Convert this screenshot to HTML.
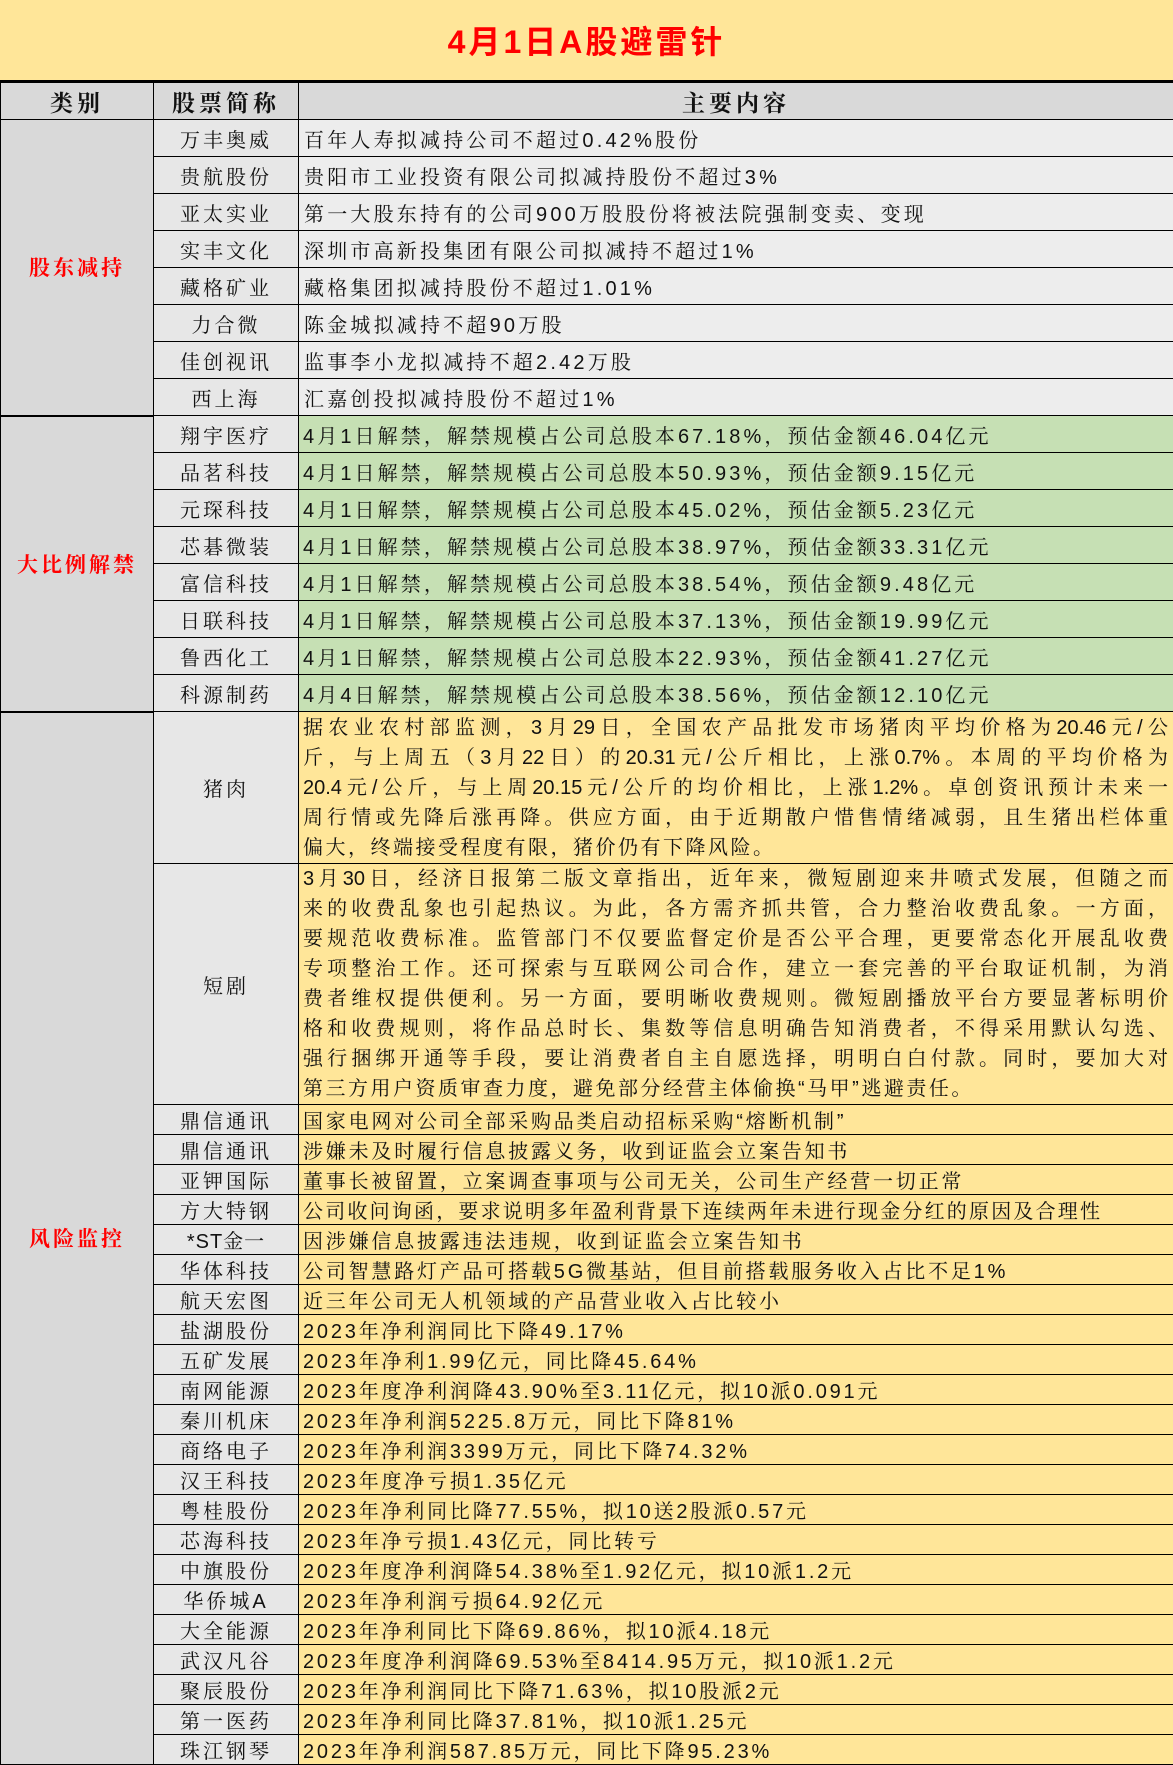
<!DOCTYPE html>
<html><head><meta charset="utf-8"><style>
*{margin:0;padding:0;box-sizing:border-box}
body{width:1173px;height:1762px;overflow:hidden;background:#fff;font-family:"Liberation Sans","Noto Serif CJK SC",serif;}
.title{height:82px;background:#FFE699;border-bottom:2px solid #000;text-align:center;line-height:84px;color:#f00;font-weight:bold;font-size:32px;letter-spacing:3px;font-family:"Liberation Sans","Noto Sans CJK SC",sans-serif}
table{border-collapse:collapse;width:1173px;table-layout:fixed}
td{border:1px solid #000;padding:0;font-size:20px;color:#111;overflow:hidden;white-space:nowrap}
.h td{background:#D9D9D9;height:37px;text-align:center;font-weight:bold;font-size:23px;letter-spacing:4px;font-family:"Liberation Sans","Noto Serif CJK SC",serif}
.cat{background:#D9D9D9;text-align:center;color:#f00;font-weight:bold;font-size:21px;letter-spacing:3px;border-bottom:2px solid #000}
.n{background:#E7E7E7;text-align:center;letter-spacing:3px}
.g{background:#EDEDED;padding-left:5px;letter-spacing:3.2px}
.gr{background:#C6E0B4;padding-left:4px;letter-spacing:3.1px}
.y{background:#FFE699;padding-left:4px;letter-spacing:2.8px}
.r37 td{height:37px}
.r30 td{height:30px}
.p{background:#FFE699;padding:0 5px 0 4px;white-space:normal;vertical-align:middle}
.p div{height:30px;line-height:30px;text-align:justify;text-align-last:justify;white-space:nowrap}
.p div.l{text-align-last:left;letter-spacing:2.5px}
</style></head><body>
<div class="title">4月1日A股避雷针</div>
<table>
<colgroup><col style="width:153px"><col style="width:145px"><col style="width:875px"></colgroup>
<tr class="h"><td>类别</td><td>股票简称</td><td>主要内容</td></tr>
<tr class="r37"><td class="cat" rowspan="8">股东减持</td><td class="n">万丰奥威</td><td class="g">百年人寿拟减持公司不超过0.42%股份</td></tr>
<tr class="r37"><td class="n">贵航股份</td><td class="g">贵阳市工业投资有限公司拟减持股份不超过3%</td></tr>
<tr class="r37"><td class="n">亚太实业</td><td class="g">第一大股东持有的公司900万股股份将被法院强制变卖、变现</td></tr>
<tr class="r37"><td class="n">实丰文化</td><td class="g">深圳市高新投集团有限公司拟减持不超过1%</td></tr>
<tr class="r37"><td class="n">藏格矿业</td><td class="g">藏格集团拟减持股份不超过1.01%</td></tr>
<tr class="r37"><td class="n">力合微</td><td class="g">陈金城拟减持不超90万股</td></tr>
<tr class="r37"><td class="n">佳创视讯</td><td class="g">监事李小龙拟减持不超2.42万股</td></tr>
<tr class="r37"><td class="n">西上海</td><td class="g">汇嘉创投拟减持股份不超过1%</td></tr>
<tr class="r37"><td class="cat" rowspan="8">大比例解禁</td><td class="n">翔宇医疗</td><td class="gr">4月1日解禁，解禁规模占公司总股本67.18%，预估金额46.04亿元</td></tr>
<tr class="r37"><td class="n">品茗科技</td><td class="gr">4月1日解禁，解禁规模占公司总股本50.93%，预估金额9.15亿元</td></tr>
<tr class="r37"><td class="n">元琛科技</td><td class="gr">4月1日解禁，解禁规模占公司总股本45.02%，预估金额5.23亿元</td></tr>
<tr class="r37"><td class="n">芯碁微装</td><td class="gr">4月1日解禁，解禁规模占公司总股本38.97%，预估金额33.31亿元</td></tr>
<tr class="r37"><td class="n">富信科技</td><td class="gr">4月1日解禁，解禁规模占公司总股本38.54%，预估金额9.48亿元</td></tr>
<tr class="r37"><td class="n">日联科技</td><td class="gr">4月1日解禁，解禁规模占公司总股本37.13%，预估金额19.99亿元</td></tr>
<tr class="r37"><td class="n">鲁西化工</td><td class="gr">4月1日解禁，解禁规模占公司总股本22.93%，预估金额41.27亿元</td></tr>
<tr class="r37"><td class="n">科源制药</td><td class="gr">4月4日解禁，解禁规模占公司总股本38.56%，预估金额12.10亿元</td></tr>
<tr><td class="cat" rowspan="24" style="border-bottom:1px solid #000">风险监控</td><td class="n" style="height:152px">猪肉</td><td class="p">
<div>据农业农村部监测，3月29日，全国农产品批发市场猪肉平均价格为20.46元/公</div>
<div>斤，与上周五（3月22日）的20.31元/公斤相比，上涨0.7%。本周的平均价格为</div>
<div>20.4元/公斤，与上周20.15元/公斤的均价相比，上涨1.2%。卓创资讯预计未来一</div>
<div>周行情或先降后涨再降。供应方面，由于近期散户惜售情绪减弱，且生猪出栏体重</div>
<div class="l">偏大，终端接受程度有限，猪价仍有下降风险。</div></td></tr>
<tr><td class="n" style="height:241px">短剧</td><td class="p">
<div>3月30日，经济日报第二版文章指出，近年来，微短剧迎来井喷式发展，但随之而</div>
<div>来的收费乱象也引起热议。为此，各方需齐抓共管，合力整治收费乱象。一方面，</div>
<div>要规范收费标准。监管部门不仅要监督定价是否公平合理，更要常态化开展乱收费</div>
<div>专项整治工作。还可探索与互联网公司合作，建立一套完善的平台取证机制，为消</div>
<div>费者维权提供便利。另一方面，要明晰收费规则。微短剧播放平台方要显著标明价</div>
<div>格和收费规则，将作品总时长、集数等信息明确告知消费者，不得采用默认勾选、</div>
<div>强行捆绑开通等手段，要让消费者自主自愿选择，明明白白付款。同时，要加大对</div>
<div class="l">第三方用户资质审查力度，避免部分经营主体偷换“马甲”逃避责任。</div></td></tr>
<tr class="r30"><td class="n">鼎信通讯</td><td class="y">国家电网对公司全部采购品类启动招标采购“熔断机制”</td></tr>
<tr class="r30"><td class="n">鼎信通讯</td><td class="y">涉嫌未及时履行信息披露义务，收到证监会立案告知书</td></tr>
<tr class="r30"><td class="n">亚钾国际</td><td class="y">董事长被留置，立案调查事项与公司无关，公司生产经营一切正常</td></tr>
<tr class="r30"><td class="n">方大特钢</td><td class="y" style="letter-spacing:2.2px">公司收问询函，要求说明多年盈利背景下连续两年未进行现金分红的原因及合理性</td></tr>
<tr class="r30"><td class="n" style="letter-spacing:1px">*ST金一</td><td class="y">因涉嫌信息披露违法违规，收到证监会立案告知书</td></tr>
<tr class="r30"><td class="n">华体科技</td><td class="y">公司智慧路灯产品可搭载5G微基站，但目前搭载服务收入占比不足1%</td></tr>
<tr class="r30"><td class="n">航天宏图</td><td class="y">近三年公司无人机领域的产品营业收入占比较小</td></tr>
<tr class="r30"><td class="n">盐湖股份</td><td class="y">2023年净利润同比下降49.17%</td></tr>
<tr class="r30"><td class="n">五矿发展</td><td class="y">2023年净利1.99亿元，同比降45.64%</td></tr>
<tr class="r30"><td class="n">南网能源</td><td class="y">2023年度净利润降43.90%至3.11亿元，拟10派0.091元</td></tr>
<tr class="r30"><td class="n">秦川机床</td><td class="y">2023年净利润5225.8万元，同比下降81%</td></tr>
<tr class="r30"><td class="n">商络电子</td><td class="y">2023年净利润3399万元，同比下降74.32%</td></tr>
<tr class="r30"><td class="n">汉王科技</td><td class="y">2023年度净亏损1.35亿元</td></tr>
<tr class="r30"><td class="n">粤桂股份</td><td class="y">2023年净利同比降77.55%，拟10送2股派0.57元</td></tr>
<tr class="r30"><td class="n">芯海科技</td><td class="y">2023年净亏损1.43亿元，同比转亏</td></tr>
<tr class="r30"><td class="n">中旗股份</td><td class="y">2023年度净利润降54.38%至1.92亿元，拟10派1.2元</td></tr>
<tr class="r30"><td class="n">华侨城A</td><td class="y">2023年净利润亏损64.92亿元</td></tr>
<tr class="r30"><td class="n">大全能源</td><td class="y">2023年净利同比下降69.86%，拟10派4.18元</td></tr>
<tr class="r30"><td class="n">武汉凡谷</td><td class="y">2023年度净利润降69.53%至8414.95万元，拟10派1.2元</td></tr>
<tr class="r30"><td class="n">聚辰股份</td><td class="y">2023年净利润同比下降71.63%，拟10股派2元</td></tr>
<tr class="r30"><td class="n">第一医药</td><td class="y">2023年净利同比降37.81%，拟10派1.25元</td></tr>
<tr class="r30"><td class="n">珠江钢琴</td><td class="y">2023年净利润587.85万元，同比下降95.23%</td></tr>
</table>
</body></html>
